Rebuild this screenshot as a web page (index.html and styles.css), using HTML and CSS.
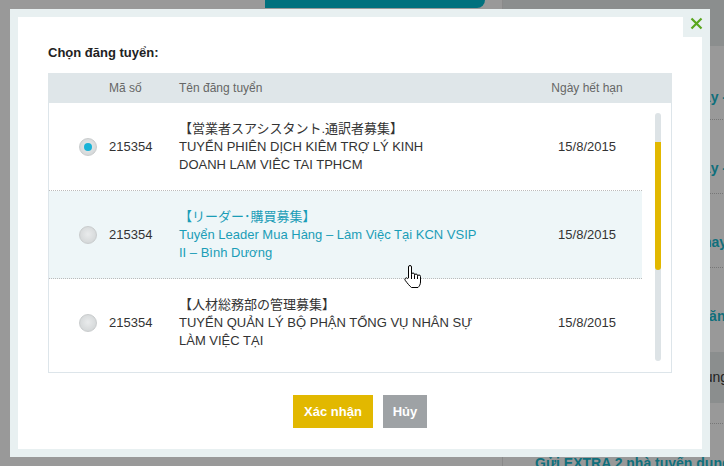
FILE: index.html
```html
<!DOCTYPE html>
<html lang="vi">
<head>
    <meta charset="UTF-8">
    <meta name="viewport" content="width=device-width, initial-scale=1.0">
    <title>Chọn đăng tuyển</title>
    <link rel="stylesheet" href="styles.css">
</head>
<body>
<div class="page">
    <div class="page-main">
        <div class="page-tab"></div>
    </div>
    <aside class="page-side">
        <div class="side-top"></div>
        <div class="side-item side-item-first"><span>Đăng ngày -</span></div>
        <div class="side-item"><span>Đăng ngày -</span></div>
        <div class="side-item"><span>Hôm nay</span></div>
        <div class="side-item side-item-cut"><span>Tăng</span></div>
        <div class="side-band"><span>Đang tuyển dụng</span></div>
        <div class="side-item side-item-last"><span>Gửi EXTRA 2 nhà tuyển dụng</span></div>
    </aside>
</div>

<!-- Popup: choose a job posting -->
<div class="modal">
    <div class="modal-inner">
        <button class="modal-close" type="button" aria-label="Đóng">
            <svg width="13" height="13" viewBox="0 0 13 13"><path d="M1.5 1.5 L11.5 11.5 M11.5 1.5 L1.5 11.5" stroke="#5aa61e" stroke-width="2.2" fill="none"/></svg>
        </button>

        <h2 class="modal-title">Chọn đăng tuyển:</h2>

        <div class="job-table">
            <div class="job-head">
                <span></span>
                <span>Mã số</span>
                <span>Tên đăng tuyển</span>
                <span class="col-date">Ngày hết hạn</span>
            </div>
            <div class="job-body">
                <div class="job-list">
                    <label class="job-row">
                        <span class="radio radio-checked"></span>
                        <span class="job-code">215354</span>
                        <span class="job-name">【営業者スアシスタント.通訳者募集】<br>TUYỂN PHIÊN DỊCH KIÊM TRỢ LÝ KINH<br>DOANH LAM VIÊC TAI TPHCM</span>
                        <span class="col-date">15/8/2015</span>
                    </label>
                    <label class="job-row job-row-hover">
                        <span class="radio"></span>
                        <span class="job-code">215354</span>
                        <span class="job-name">【リーダー･購買募集】<br>Tuyển Leader Mua Hàng – Làm Việc Tại KCN VSIP<br>II – Bình Dương</span>
                        <span class="col-date">15/8/2015</span>
                    </label>
                    <label class="job-row">
                        <span class="radio"></span>
                        <span class="job-code">215354</span>
                        <span class="job-name">【人材総務部の管理募集】<br>TUYỂN QUẢN LÝ BỘ PHẬN TỔNG VỤ NHÂN SỰ<br>LÀM VIỆC TẠI</span>
                        <span class="col-date">15/8/2015</span>
                    </label>
                </div>
                <div class="scroll-track">
                    <div class="scroll-thumb"></div>
                </div>
            </div>
        </div>

        <div class="modal-actions">
            <button class="btn btn-confirm" type="button">Xác nhận</button>
            <button class="btn btn-cancel" type="button">Hủy</button>
        </div>
    </div>
</div>

<svg class="hand-cursor" width="19" height="25" viewBox="0 0 19 25">
    <path d="M5.5 14 V3 a1.5 1.5 0 0 1 3 0 V10.5 a1.5 1.5 0 0 1 3 0 V11.5 a1.5 1.5 0 0 1 3 0 V12.5 a1.5 1.5 0 0 1 3 0 V18 c0 2.5 -1.2 4.2 -2.5 5.5 H8.5 c-1.6 -1.2 -4 -4 -6.3 -7.2 a1.5 1.5 0 0 1 2.4 -1.8 Z M8.5 10.5 V15 M11.5 11.5 V15 M14.5 12.5 V15" fill="#fff" stroke="#000" stroke-width="1" stroke-linejoin="round"/>
</svg>
</body>
</html>
```

FILE: styles.css
```css
body {
    margin: 0;
    width: 724px;
    height: 466px;
    overflow: hidden;
    position: relative;
    background-color: #999;
    font-family: "Liberation Sans", Arial, "Noto Sans CJK JP", sans-serif;
}

/* Page behind the overlay */
.page {
    display: flex;
    height: 466px;
}

.page-main {
    width: 502px;
    flex-shrink: 0;
}

.page-tab {
    margin-left: 265px;
    width: 220px;
    height: 8px;
    background-color: #00717e;
    border-bottom-right-radius: 8px 8px;
}

.page-side {
    width: 260px;
    flex-shrink: 0;
    border-left: 1px solid #8a8a8a;
    overflow: hidden;
}

.side-top {
    height: 46px;
    background-color: #8b8e8e;
}

.side-item {
    height: 74px;
    padding: 40px 36px 0 0;
    box-sizing: border-box;
    border-bottom: 1px dotted #777;
    font-size: 14px;
    font-weight: bold;
    color: #0f6f7c;
    white-space: nowrap;
    text-align: right;
}

.side-item-first {
    padding-top: 43px;
}

.side-item-cut {
    height: 84px;
    border-bottom: none;
    padding-right: 29px;
}

.side-band {
    height: 51px;
    padding: 17px 35px 0 0;
    box-sizing: border-box;
    background-color: #8b8e8e;
    font-size: 14px;
    color: #222;
    white-space: nowrap;
    text-align: right;
}

.side-item-last {
    height: 60px;
    margin-top: 20px;
    padding: 31px 0 0 32px;
    border-bottom: none;
    border-top: 1px dotted #777;
    text-align: left;
}

/* Modal */
.modal {
    position: absolute;
    left: 10px;
    top: 9px;
    width: 700px;
    height: 448px;
    box-sizing: border-box;
    border: 8px solid #e8f0f1;
    background-color: #fff;
}

.modal-inner {
    position: relative;
    padding: 28px 30px 22px 30px;
}

.modal-close {
    position: absolute;
    top: -8px;
    right: -8px;
    width: 27px;
    height: 28px;
    padding: 8px 0 0 7px;
    border: none;
    background-color: #e8f0f1;
    display: flex;
    align-items: flex-start;
    box-sizing: border-box;
}

.modal-title {
    margin: 0 0 13px 0;
    font-size: 13px;
    line-height: 15px;
    font-weight: bold;
    color: #222;
}

.job-table {
    border: 1px solid #dde5ea;
    border-top: none;
}

.job-head,
.job-row {
    display: grid;
    grid-template-columns: 60px 70px 1fr 110px;
    align-items: center;
}

.job-head {
    height: 30px;
    margin: 0 -1px;
    padding: 0 30px 0 1px;
    background-color: #dfe6e9;
    font-size: 12px;
    color: #666;
}

.col-date {
    text-align: center;
}

.job-body {
    display: flex;
    height: 269px;
}

.job-list {
    flex: 1;
    overflow: hidden;
}

.job-row {
    height: 87px;
    border-bottom: 1px dotted #bbb;
    font-size: 13px;
    color: #333;
    cursor: pointer;
}

.job-row:last-child {
    border-bottom: none;
}

.job-row-hover {
    background-color: #eef6f8;
}

.job-row-hover .job-name {
    color: #1a9db7;
}

.job-name {
    line-height: 18px;
    white-space: nowrap;
}

.radio {
    justify-self: end;
    margin-right: 12px;
    width: 18px;
    height: 18px;
    border-radius: 50%;
    box-sizing: border-box;
    border: 1px solid #c9cccd;
    background: radial-gradient(circle at 50% 45%, #e9ebec 0%, #d6d9da 70%, #c4c7c8 100%);
    display: flex;
    align-items: center;
    justify-content: center;
}

.radio-checked::after {
    content: "";
    width: 8px;
    height: 8px;
    border-radius: 50%;
    background-color: #19b3d7;
}

/* Scrollbar */
.scroll-track {
    width: 6px;
    margin: 10px 10px 11px 13px;
    border-radius: 3px;
    background-color: #dde3e6;
    padding-top: 29px;
    box-sizing: border-box;
}

.scroll-thumb {
    height: 128px;
    border-radius: 0 0 3px 3px;
    background-color: #e2b800;
}

/* Buttons */
.modal-actions {
    display: flex;
    justify-content: center;
    gap: 10px;
    margin-top: 22px;
}

.btn {
    height: 33px;
    border: none;
    color: #fff;
    font-family: "Liberation Sans", Arial, sans-serif;
    font-size: 13px;
    font-weight: bold;
    cursor: pointer;
}

.btn-confirm {
    width: 80px;
    background-color: #e2b800;
}

.btn-cancel {
    width: 44px;
    background-color: #9ea2a5;
}

.hand-cursor {
    position: absolute;
    left: 403px;
    top: 264px;
}
```
